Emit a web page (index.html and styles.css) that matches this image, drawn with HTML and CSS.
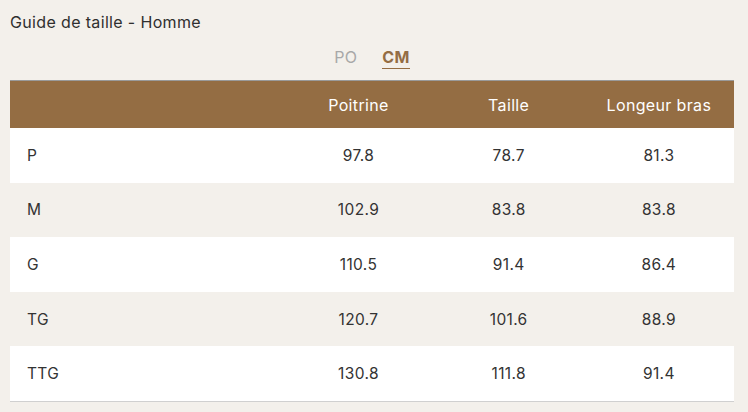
FILE: index.html
```html
<!DOCTYPE html>
<html lang="fr">
<head>
<meta charset="utf-8">
<link rel="stylesheet" href="styles.css">
</head>
<body>
<div class="page">
  <h1 class="title">Guide de taille - Homme</h1>
  <div class="units">
    <span class="unit">PO</span>
    <span class="unit active">CM</span>
  </div>
  <table class="sizes">
    <thead>
      <tr><th class="c-size"></th><th>Poitrine</th><th>Taille</th><th>Longeur bras</th></tr>
    </thead>
    <tbody>
      <tr><td class="c-size">P</td><td>97.8</td><td>78.7</td><td>81.3</td></tr>
      <tr><td class="c-size">M</td><td>102.9</td><td>83.8</td><td>83.8</td></tr>
      <tr><td class="c-size">G</td><td>110.5</td><td>91.4</td><td>86.4</td></tr>
      <tr><td class="c-size">TG</td><td>120.7</td><td>101.6</td><td>88.9</td></tr>
      <tr><td class="c-size">TTG</td><td>130.8</td><td>111.8</td><td>91.4</td></tr>
    </tbody>
  </table>
</div>
</body>
</html>
```
FILE: styles.css
```css
html, body { margin: 0; padding: 0; }
body {
  background: #f3f0eb;
  font-family: Inter, "Liberation Sans", sans-serif;
  color: #333;
  width: 748px;
  height: 412px;
  overflow: hidden;
}
.page { padding: 12px 14px 0 10px; }
.title {
  margin: 0;
  font-size: 16px;
  font-weight: 400;
  line-height: 21px;
  letter-spacing: 0.35px;
  color: #2f2f2f;
}
.units {
  display: flex;
  justify-content: center;
  gap: 25px;
  margin-top: 15px;
  height: 32px;
}
.unit {
  font-size: 16px;
  line-height: 19px;
  letter-spacing: 0.3px;
  color: #a8a8a8;
  height: 20px;
}
.unit.active {
  color: #946d43;
  font-weight: 700;
  border-bottom: 1px solid #946d43;
}
.sizes {
  width: 724px;
  border-collapse: collapse;
  table-layout: fixed;
  font-size: 15.5px;
  letter-spacing: 0.35px;
}
.sizes thead tr {
  background: #946d43;
  border-top: 1px solid #9a9a9a;
}
.sizes th {
  height: 47px;
  padding: 0;
  color: #fff;
  font-weight: 400;
  font-size: 16px;
  text-align: center;
  width: 150px;
}
.sizes th.c-size { width: 273px; }
.sizes td {
  height: 54.6px;
  padding: 0;
  text-align: center;
  color: #333;
}
.sizes td.c-size { text-align: left; padding-left: 17px; }
.sizes tbody tr:nth-child(odd) { background: #fff; }
.sizes tbody tr:nth-child(even) { background: #f3f0eb; }
.sizes tbody tr:last-child { border-bottom: 1px solid #d0d0d0; }
```
